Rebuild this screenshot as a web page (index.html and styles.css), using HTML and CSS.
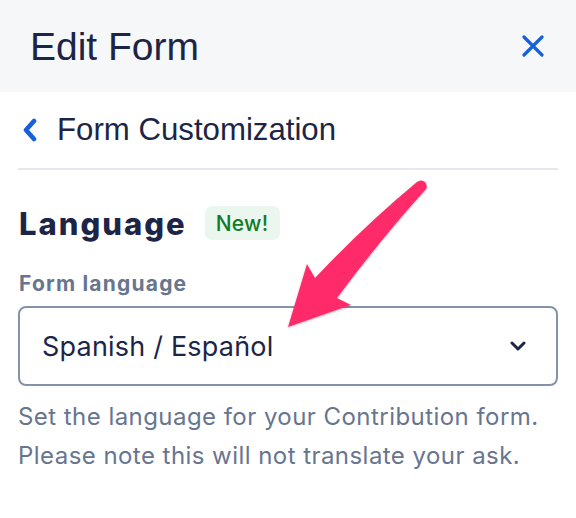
FILE: index.html
```html
<!DOCTYPE html>
<html lang="en">
<head>
<meta charset="utf-8">
<title>Edit Form</title>
<link rel="stylesheet" href="styles.css">
</head>
<body>
<div class="panel">
  <header class="header">
    <h1 class="title">Edit Form</h1>
    <button class="close" aria-label="Close">
      <svg width="22" height="22" viewBox="0 0 22 22"><path d="M2 2 L20 20 M20 2 L2 20" stroke="#1760d9" stroke-width="3.2" stroke-linecap="round" fill="none"/></svg>
    </button>
  </header>
  <div class="content">
    <div class="back">
      <svg class="chev" width="16" height="24" viewBox="0 0 16 24"><path d="M12 3 L4 12 L12 21" stroke="#1760d9" stroke-width="4.6" stroke-linecap="round" stroke-linejoin="round" fill="none"/></svg>
      <span class="back-text">Form Customization</span>
    </div>
    <div class="section">
      <div class="heading-row">
        <h2 class="heading">Language</h2>
        <span class="badge">New!</span>
      </div>
      <label class="label">Form language</label>
      <div class="select">
        <span class="select-value">Spanish / Español</span>
        <svg class="select-chev" width="16" height="10" viewBox="0 0 16 10"><path d="M2 2 L8 8 L14 2" stroke="#1d2547" stroke-width="3" stroke-linecap="round" stroke-linejoin="round" fill="none"/></svg>
      </div>
      <p class="help">Set the language for your Contribution form.<br>Please note this will not translate your ask.</p>
    </div>
  </div>
  <svg class="arrow" width="576" height="518" viewBox="0 0 576 518">
    <defs>
      <filter id="sh" x="-20%" y="-20%" width="140%" height="140%">
        <feDropShadow dx="0" dy="1" stdDeviation="1.2" flood-color="#000" flood-opacity="0.25"/>
      </filter>
    </defs>
    <path filter="url(#sh)" fill="#fe2c6a" d="M417 182 Q421 179 425 182 Q428 186 426 189 Q380 240 337 298 L351 305 L288 327 L307 264 L315 278 Q365 225 417 182 Z"/>
  </svg>
</div>
</body>
</html>
```
FILE: styles.css
```css
html, body {
  margin: 0;
  padding: 0;
  background: #ffffff;
}
.panel {
  position: relative;
  width: 576px;
  height: 518px;
  overflow: hidden;
  font-family: Inter, "Noto Sans", sans-serif;
}
.header {
  height: 92px;
  background: #f6f7f9;
  display: flex;
  align-items: center;
  justify-content: space-between;
  padding: 0 32px 0 30px;
}
.title {
  margin: 0;
  font-family: "Liberation Sans", Arial, sans-serif;
  font-weight: 400;
  font-size: 39px;
  color: #1d2547;
  line-height: 1;
}
.close {
  border: 0;
  background: transparent;
  padding: 0;
  width: 22px;
  height: 22px;
  display: flex;
}
.content {
  padding: 0 18px;
}
.back {
  height: 76px;
  display: flex;
  align-items: center;
  border-bottom: 2px solid #e4e7ec;
  padding-left: 4px;
  gap: 19px;
}
.chev {
  display: block;
}
.back-text {
  font-family: "Liberation Sans", Arial, sans-serif;
  font-size: 31.2px;
  color: #1d2547;
}
.section {
  padding-top: 36px;
}
.heading-row {
  display: flex;
  align-items: center;
  gap: 18px;
  height: 34px;
}
.heading {
  margin: 0 0 0 1px;
  font-family: Inter, sans-serif;
  font-weight: 800;
  font-size: 31px;
  color: #1d2547;
  letter-spacing: 2px;
}
.badge {
  background: #eaf6ee;
  color: #127a27;
  border-radius: 7px;
  font-size: 21px;
  font-weight: 500;
  height: 34px;
  padding: 0 11px;
  display: flex;
  align-items: center;
  letter-spacing: 0.3px;
}
.label {
  display: block;
  margin-top: 31px;
  margin-left: 1px;
  font-weight: 700;
  font-size: 21px;
  color: #67758f;
  letter-spacing: 1.2px;
}
.select {
  margin-top: 10px;
  height: 80px;
  box-sizing: border-box;
  border: 2px solid #8592a8;
  border-radius: 8px;
  display: flex;
  align-items: center;
  justify-content: space-between;
  padding: 0 30px 0 22px;
}
.select-value {
  font-size: 27px;
  color: #1d2547;
  letter-spacing: 0.2px;
}
.help {
  margin: 11px 0 0;
  font-size: 24px;
  line-height: 39px;
  color: #67758f;
  letter-spacing: 0.45px;
}
.arrow {
  position: absolute;
  left: 0;
  top: 0;
  pointer-events: none;
}
```
